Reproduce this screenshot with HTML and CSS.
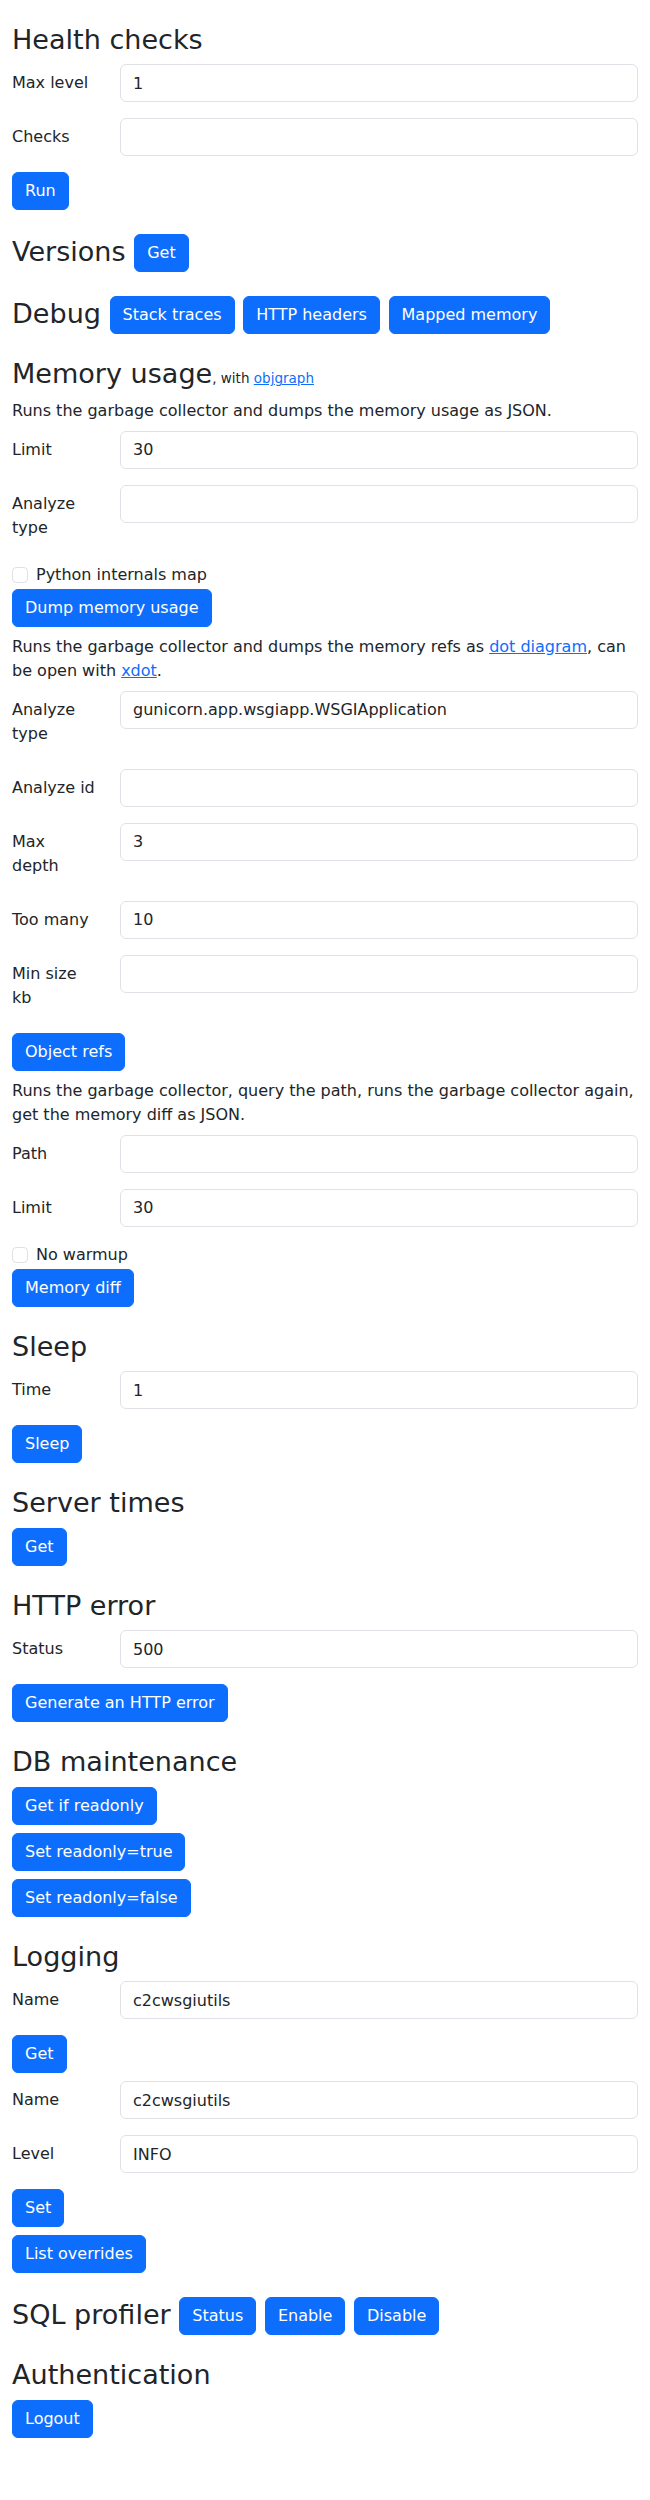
FILE: index.html
```html
<!DOCTYPE html>
<html lang="en">
<head>
<meta charset="utf-8">
<title>c2cwsgiutils</title>
<link rel="stylesheet" href="styles.css">
</head>
<body>
<div class="page">
  <h2>Health checks</h2>
  <form class="form">
    <div class="row"><label class="lbl">Max level</label><div class="field"><input class="ctl" type="text" value="1"></div></div>
    <div class="row"><label class="lbl">Checks</label><div class="field"><input class="ctl" type="text" value=""></div></div>
    <button class="btn" type="button">Run</button>
  </form>

  <h2>Versions <button class="btn" type="button">Get</button></h2>

  <h2>Debug <button class="btn" type="button">Stack traces</button> <button class="btn" type="button">HTTP headers</button> <button class="btn" type="button">Mapped memory</button></h2>

  <h2>Memory usage<span class="sub">, with <a href="#">objgraph</a></span></h2>
  <p class="desc">Runs the garbage collector and dumps the memory usage as JSON.</p>
  <form class="form">
    <div class="row"><label class="lbl">Limit</label><div class="field"><input class="ctl" type="text" value="30"></div></div>
    <div class="row"><label class="lbl">Analyze type</label><div class="field"><input class="ctl" type="text" value=""></div></div>
    <div class="check"><input class="box" type="checkbox"><label>Python internals map</label></div>
    <button class="btn" type="button">Dump memory usage</button>
  </form>
  <p class="desc">Runs the garbage collector and dumps the memory refs as <a href="#">dot diagram</a>, can be open with <a href="#">xdot</a>.</p>
  <form class="form">
    <div class="row"><label class="lbl">Analyze type</label><div class="field"><input class="ctl" type="text" value="gunicorn.app.wsgiapp.WSGIApplication"></div></div>
    <div class="row"><label class="lbl">Analyze id</label><div class="field"><input class="ctl" type="text" value=""></div></div>
    <div class="row"><label class="lbl">Max depth</label><div class="field"><input class="ctl" type="text" value="3"></div></div>
    <div class="row"><label class="lbl">Too many</label><div class="field"><input class="ctl" type="text" value="10"></div></div>
    <div class="row"><label class="lbl">Min size kb</label><div class="field"><input class="ctl" type="text" value=""></div></div>
    <button class="btn" type="button">Object refs</button>
  </form>
  <p class="desc">Runs the garbage collector, query the path, runs the garbage collector again, get the memory diff as JSON.</p>
  <form class="form">
    <div class="row"><label class="lbl">Path</label><div class="field"><input class="ctl" type="text" value=""></div></div>
    <div class="row"><label class="lbl">Limit</label><div class="field"><input class="ctl" type="text" value="30"></div></div>
    <div class="check"><input class="box" type="checkbox"><label>No warmup</label></div>
    <button class="btn" type="button">Memory diff</button>
  </form>

  <h2>Sleep</h2>
  <form class="form">
    <div class="row"><label class="lbl">Time</label><div class="field"><input class="ctl" type="text" value="1"></div></div>
    <button class="btn" type="button">Sleep</button>
  </form>

  <h2>Server times</h2>
  <form class="form">
    <button class="btn" type="button">Get</button>
  </form>

  <h2>HTTP error</h2>
  <form class="form">
    <div class="row"><label class="lbl">Status</label><div class="field"><input class="ctl" type="text" value="500"></div></div>
    <button class="btn" type="button">Generate an HTTP error</button>
  </form>

  <h2>DB maintenance</h2>
  <form class="form"><button class="btn" type="button">Get if readonly</button></form>
  <form class="form"><button class="btn" type="button">Set readonly=true</button></form>
  <form class="form"><button class="btn" type="button">Set readonly=false</button></form>

  <h2>Logging</h2>
  <form class="form">
    <div class="row"><label class="lbl">Name</label><div class="field"><input class="ctl" type="text" value="c2cwsgiutils"></div></div>
    <button class="btn" type="button">Get</button>
  </form>
  <form class="form">
    <div class="row"><label class="lbl">Name</label><div class="field"><input class="ctl" type="text" value="c2cwsgiutils"></div></div>
    <div class="row"><label class="lbl">Level</label><div class="field"><input class="ctl" type="text" value="INFO"></div></div>
    <button class="btn" type="button">Set</button>
  </form>
  <form class="form"><button class="btn" type="button">List overrides</button></form>

  <h2>SQL profiler <button class="btn" type="button">Status</button> <button class="btn" type="button">Enable</button> <button class="btn" type="button">Disable</button></h2>

  <h2>Authentication</h2>
  <form class="form"><button class="btn" type="button">Logout</button></form>
</div>
</body>
</html>
```

FILE: styles.css
```css
html, body {
  margin: 0;
  padding: 0;
  background: #fff;
}
body {
  font-family: "DejaVu Sans", sans-serif;
  font-size: 16px;
  line-height: 1.5;
  color: #212529;
}
*, *::before, *::after {
  box-sizing: border-box;
}
.page {
  padding: 0 12px;
}
h2 {
  font-size: 27.05px;
  font-weight: 500;
  line-height: 1.2;
  margin: 24px 0 8px;
}
.sub {
  font-size: 50%;
  font-weight: 400;
}
a {
  color: #0d6efd;
  text-decoration: underline;
}
.desc {
  margin: 8px 0;
}
.form {
  margin: 0 0 8px;
}
.row {
  display: grid;
  grid-template-columns: 108px 1fr;
  margin: 0 -12px 16px;
}
.lbl {
  padding: 7px 12px;
  line-height: 1.5;
}
.field {
  padding: 0 12px;
}
.ctl {
  display: block;
  width: 100%;
  height: 38px;
  padding: 6px 12px;
  font-family: inherit;
  font-size: 16px;
  line-height: 1.5;
  color: #212529;
  background: #fff;
  border: 1px solid #dee2e6;
  border-radius: 6px;
  outline: none;
}
.btn {
  display: inline-block;
  vertical-align: middle;
  padding: 6px 12px;
  font-family: inherit;
  font-size: 16px;
  font-weight: 400;
  line-height: 1.5;
  color: #fff;
  background: #0d6efd;
  border: 1px solid #0d6efd;
  border-radius: 6px;
  cursor: pointer;
}
.check {
  display: block;
  min-height: 24px;
  padding-left: 24px;
  margin-bottom: 2px;
}
.box {
  appearance: none;
  -webkit-appearance: none;
  float: left;
  width: 16px;
  height: 16px;
  margin: 4px 0 0 -24px;
  border: 1px solid #dee2e6;
  border-radius: 4px;
  background: #fff;
  vertical-align: top;
}
```
